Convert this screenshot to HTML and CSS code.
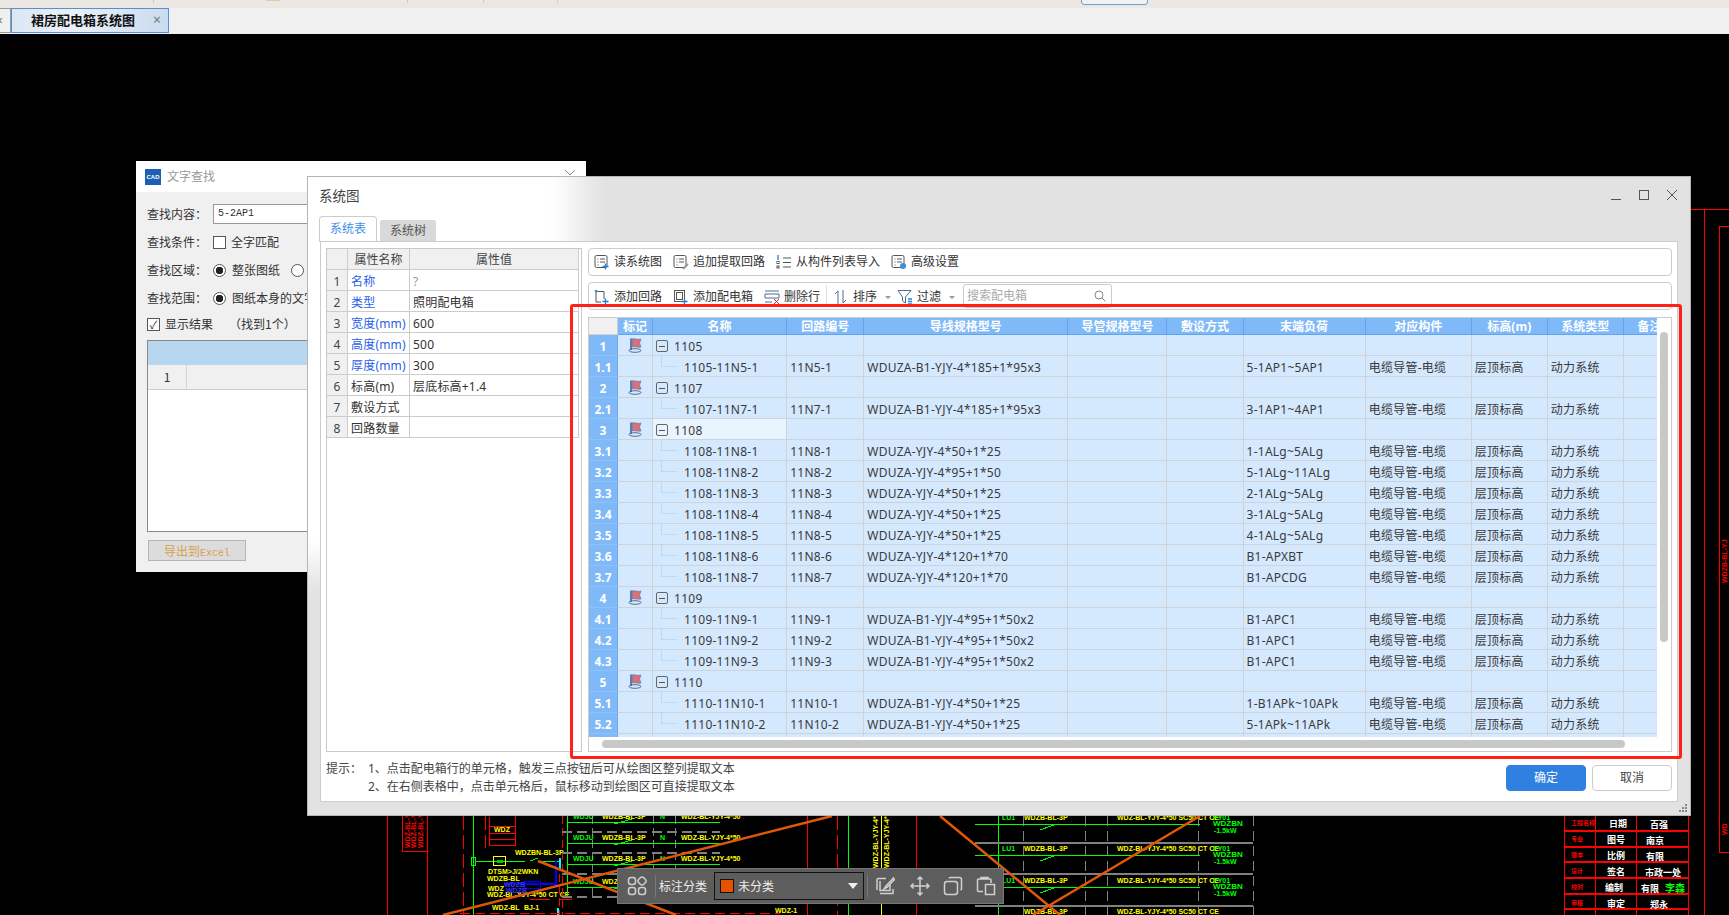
FILE: index.html
```html
<!DOCTYPE html>
<html lang="zh-CN">
<head>
<meta charset="utf-8">
<title>系统图</title>
<link rel="stylesheet" href="styles.css">
</head>
<body>
<svg class="defs" width="0" height="0" aria-hidden="true">
  <symbol id="i-doc" viewBox="0 0 16 16"><rect x="1" y="1.500" width="12" height="12" rx="1.500" class="s-dark"/><path d="M3.500 5h1M6 5h5M3.500 8h1M6 8h5M3.500 11h1" class="s-dark"/></symbol>
  <symbol id="i-plus" viewBox="0 0 16 16"><path d="M11.500 9.500v6M8.500 12.500h6" class="s-blue"/></symbol>
  <symbol id="i-flag" viewBox="0 0 16 16"><ellipse cx="8" cy="13.500" rx="6" ry="1.800" class="s-steel"/><path d="M4 13V1.500" class="s-pole"/><path d="M5 2c3-1 4 1 9 0l-1.500 4 1.500 4c-3 1-6-1-9 0z" class="f-pink"/></symbol>
</svg>

<svg class="cad" viewBox="0 0 1729 915" aria-hidden="true">
  <defs>
    <g id="row-left">
      <path d="M567 0H720" class="c-green"/>
      <path d="M562 10H720" class="c-gray c-dash"/>
      <text x="573" y="-3" class="c-t-green">WDJU</text>
      <text x="602" y="-3" class="c-t-yel">WDZB-BL-3P</text>
      <text x="660" y="-3" class="c-t-green">N</text>
      <path d="M614 2l18-5" class="c-green"/>
      <text x="681" y="-3" class="c-t-yel">WDZ-BL-YJY-4*50</text>
    </g>
    <g id="row-right">
      <path d="M975 0H1200" class="c-green"/>
      <path d="M975 19H1253" class="c-gray"/>
      <text x="1002" y="-4" class="c-t-green">LU1</text>
      <text x="1024" y="-4" class="c-t-yel">WDZB-BL-3P</text>
      <path d="M1040 6l14-5" class="c-green"/>
      <text x="1117" y="-4" class="c-t-yel">WDZ-BL-YJY-4*50 SC50 CT CE</text>
      <text x="1213" y="-4" class="c-t-green">PY01</text>
      <text x="1213" y="2" class="c-t-gb">WDZBN</text>
      <text x="1214" y="9" class="c-t-green">-1.5kW</text>
    </g>
    <g id="row-title">
      <path d="M1564 16H1688" class="c-red2"/>
    </g>
  </defs>
  <path d="M1691 209.500H1729M1704.500 209V915M1688.500 816V915" class="c-red"/>
  <rect x="1719.500" y="226.500" width="20" height="626" class="c-red"/>
  <text x="0" y="0" transform="translate(1727 583) rotate(-90)" class="c-t-red">WDZB-BL-YJ</text>
  <text x="0" y="0" transform="translate(1727 835) rotate(-90)" class="c-t-red">WD</text>

  <path d="M387.500 810V915M427.500 810V915" class="c-red"/>
  <rect x="402.500" y="805" width="25" height="46" class="c-red"/>
  <text transform="translate(410 848) rotate(-90)" class="c-t-red">WDZ-BL-YJY</text>
  <text transform="translate(416 848) rotate(-90)" class="c-t-red">WDZ-BL-YJY</text>
  <text transform="translate(423 848) rotate(-90)" class="c-t-red">WDZ-BL-YJY</text>
  <path d="M463.500 816V915M485.500 816V848" class="c-red c-dash-l"/>
  <path d="M473.500 816V915" class="c-green"/>
  <path d="M489 816.500V845H515V816M489 826H515M489 833H515M489 839H515" class="c-red"/>
  <text x="494" y="832" class="c-t-yel">WDZ</text>
  <rect x="471.500" y="857.500" width="4" height="8" class="c-green"/>
  <path d="M475 861H525M530 861l8-3M538 861H560" class="c-green"/>
  <rect x="493.500" y="856.500" width="12" height="9" class="c-yel"/>
  <rect x="497" y="860" width="6" height="3" class="c-fgreen"/>
  <text x="515" y="855" class="c-t-yel">WDZBN-BL-3P</text>
  <text x="488" y="874" class="c-t-yel">DTSM&gt;J/2WKN</text>
  <text x="487" y="881" class="c-t-yel">WDZB-BL</text>
  <text x="488" y="891" class="c-t-yel">WDZ</text>
  <text x="487" y="897" class="c-t-yel">WDZ-BL-YJY-4*50 CT CE</text>
  <text x="492" y="910" class="c-t-yel">WDZ-BL</text>
  <text x="524" y="910" class="c-t-yel">BJ-1</text>
  <path d="M504 884H556V860" class="c-blue"/>
  <rect x="524.500" y="881.500" width="16" height="7" class="c-blue"/>
  <text x="504" y="887" class="c-t-blue">WDZB</text>
  <text x="506" y="893" class="c-t-blue">WDZB</text>
  <path d="M530 899H550M560 899H572" class="c-red"/>
  <path d="M559.500 862V915M562 816V915" class="c-red c-dash-s"/>
  <path d="M558 908V915M560 858V870" class="c-cyan"/>
  <path d="M567.500 816V898" class="c-green"/>
  <path d="M592.500 816V898M653.500 816V898M675.500 816V898" class="c-gray c-dash-s"/>
  <use href="#row-left" y="822"/>
  <use href="#row-left" y="843"/>
  <use href="#row-left" y="864"/>
  <use href="#row-left" y="887"/>
  <path d="M460 913H780" class="c-red c-dash"/>
  <path d="M807.500 816V915M916.500 816V915" class="c-red"/>
  <path d="M837.500 816V915" class="c-red c-dash-l"/>
  <path d="M881.500 816V915" class="c-yel"/>
  <path d="M848.500 816V915M998.500 816V915" class="c-green"/>
  <text transform="translate(878 868) rotate(-90)" class="c-t-yel">WDZ-BL-YJY-4*50</text>
  <text transform="translate(889 868) rotate(-90)" class="c-t-yel">WDZ-BL-YJY-4*50</text>
  <text x="775" y="913" class="c-t-yel">WDZ-1</text>
  <path d="M1023.500 816V915M1085.500 816V915M1107.500 816V915M1198.500 816V915M1253.500 816V915" class="c-gray c-dash"/>
  <use href="#row-right" y="824"/>
  <use href="#row-right" y="855"/>
  <use href="#row-right" y="887"/>
  <text x="1024" y="914" class="c-t-yel">WDZB-BL-3P</text>
  <text x="1117" y="914" class="c-t-yel">WDZ-BL-YJY-4*50 SC50 CT CE</text>
  <path d="M1564.500 816V915M1595.500 816V915M1636.500 816V915M1688.500 816V915" class="c-red2"/>
  <use href="#row-title" y="815"/>
  <use href="#row-title" y="831"/>
  <use href="#row-title" y="846"/>
  <use href="#row-title" y="862"/>
  <use href="#row-title" y="878"/>
  <use href="#row-title" y="893"/>
  <g class="c-t-tit-r">
    <text x="1571" y="825">工程名称</text><text x="1571" y="841">专业</text><text x="1571" y="857">版本</text><text x="1571" y="873">设计</text><text x="1571" y="889">校对</text><text x="1571" y="905">审核</text>
  </g>
  <g class="c-t-tit-w">
    <text x="1609" y="827">日期</text><text x="1607" y="843">图号</text><text x="1607" y="859">比例</text><text x="1607" y="875">签名</text><text x="1605" y="891">编制</text><text x="1607" y="907">审定</text>
    <text x="1650" y="828">百强</text><text x="1646" y="844">南京</text><text x="1646" y="860">有限</text><text x="1645" y="876">市政一处</text><text x="1641" y="892">有限</text><text x="1650" y="908">郑永</text>
  </g>
  <text x="1665" y="892" class="c-t-tit-g">李森</text>
  <path d="M443 915L832 816M538 861L676 915M940 816L1060 915M1200 816L1033 915" class="c-orange"/>
</svg>

<header class="appbar">
  <div class="appbar-top">
    <span class="tick tick-a"></span><span class="tick-o"></span><span class="tick tick-b"></span><span class="tick tick-c"></span><span class="tick tick-d"></span>
    <span class="appbar-btn"></span>
  </div>
  <div class="tabstrip">
    <div class="tab-stub">×</div>
    <div class="tab-active"><span class="tab-name">裙房配电箱系统图</span><span class="tab-x">×</span></div>
  </div>
</header>

<section class="find">
  <div class="find-title">
    <span class="find-logo">CAD</span><span class="find-name">文字查找</span>
    <svg class="find-close" width="10" height="6" viewBox="0 0 10 6"><path d="M0 0l5 5 5-5" class="s-gray"/></svg>
  </div>
  <div class="find-body">
    <div class="frow"><span class="flabel">查找内容：</span><span class="finput">5-2AP1</span></div>
    <div class="frow"><span class="flabel">查找条件：</span><span class="fcheck"></span><span>全字匹配</span></div>
    <div class="frow"><span class="flabel">查找区域：</span><span class="fradio on"></span><span class="fr-t">整张图纸</span><span class="fradio"></span></div>
    <div class="frow"><span class="flabel">查找范围：</span><span class="fradio on"></span><span>图纸本身的文字</span></div>
    <div class="frow frow-res"><span class="fcheck small-check">✓</span><span>显示结果</span><span class="found">（找到1个）</span></div>
    <div class="fresult">
      <div class="fresult-head"></div>
      <div class="fresult-row"><span class="fresult-num">1</span></div>
    </div>
    <div class="fexport">导出到<span class="mono">Excel</span></div>
  </div>
</section>

<section class="sys">
  <div class="acrylic"></div>
  <div class="sys-title">
    <span class="sys-name">系统图</span>
    <div class="wctrl">
      <svg width="12" height="12" viewBox="0 0 12 12"><path d="M1 10.500H11" class="s-dark"/></svg>
      <svg width="12" height="12" viewBox="0 0 12 12"><rect x="1.500" y="1.500" width="9" height="9" class="s-dark"/></svg>
      <svg width="12" height="12" viewBox="0 0 12 12"><path d="M1 1L11 11M11 1L1 11" class="s-dark"/></svg>
    </div>
  </div>
  <div class="tabs"><span class="stab on">系统表</span><span class="stab">系统树</span></div>
  <div class="panel">
    <div class="main">
      <div class="props">
        <table class="ptable">
          <colgroup><col class="pc1"><col class="pc2"><col></colgroup>
          <thead><tr><th></th><th>属性名称</th><th>属性值</th></tr></thead>
          <tbody>
            <tr><th>1</th><td class="link">名称</td><td class="q">?</td></tr>
            <tr><th>2</th><td class="link">类型</td><td>照明配电箱</td></tr>
            <tr><th>3</th><td class="link">宽度(mm)</td><td>600</td></tr>
            <tr><th>4</th><td class="link">高度(mm)</td><td>500</td></tr>
            <tr><th>5</th><td class="link">厚度(mm)</td><td>300</td></tr>
            <tr><th>6</th><td>标高(m)</td><td>层底标高+1.4</td></tr>
            <tr><th>7</th><td>敷设方式</td><td></td></tr>
            <tr><th>8</th><td>回路数量</td><td></td></tr>
          </tbody>
        </table>
      </div>
      <div class="right">
        <div class="tbar tbar1">
          <span class="ti"><svg class="ic"><use href="#i-doc"/><use href="#i-plus"/></svg>读系统图</span>
          <span class="ti"><svg class="ic"><use href="#i-doc"/><path d="M10 15l5-5" class="s-gray2"/></svg>追加提取回路</span>
          <span class="ti"><svg class="ic" viewBox="0 0 16 16"><path d="M2 1v5" class="s-blue"/><path d="M7 4h8M7 8.500h8M7 13h8" class="s-dark"/><rect x="1" y="7.500" width="2" height="2" class="s-dark"/><rect x="1" y="12" width="2" height="2" class="s-dark"/></svg>从构件列表导入</span>
          <span class="ti"><svg class="ic"><use href="#i-doc"/><circle cx="12" cy="12" r="3" class="f-blue"/></svg>高级设置</span>
        </div>
        <div class="tbar tbar2">
          <span class="ti"><svg class="ic" viewBox="0 0 16 16"><path d="M2 2.500H10V10M2 2.500V13H7" class="s-dark"/><circle cx="2" cy="2" r="1.300" class="f-blue"/><path d="M11.500 9.500v6M8.500 12.500h6" class="s-blue"/></svg>添加回路</span>
          <span class="ti"><svg class="ic"><rect x="1.500" y="1.500" width="10" height="11" class="s-dark"/><rect x="3.500" y="3.500" width="6" height="7" class="s-dark"/><use href="#i-plus"/></svg>添加配电箱</span>
          <span class="ti"><svg class="ic" viewBox="0 0 16 16"><path d="M1 2h14M1 5h14v4H1zM1 13h7" class="s-steel"/><path d="M10 10l5 5M15 10l-5 5" class="s-red"/></svg>删除行</span>
          <span class="tsep"></span>
          <span class="ti ti-sort"><svg class="ic" viewBox="0 0 16 16"><path d="M5 15V2L2 5M10 1v13l3-3" class="s-steel"/></svg>排序<i class="caret"></i></span>
          <span class="ti"><svg class="ic" viewBox="0 0 16 16"><path d="M1 1.500H14L8.500 8v6L5.500 12V8z" class="s-steel"/><path d="M11 10h4M11 12.500h4M11 15h4" class="s-blue"/></svg>过滤<i class="caret"></i></span>
          <span class="search"><span class="search-t">搜索配电箱</span><svg width="12" height="12" viewBox="0 0 12 12"><circle cx="5" cy="5" r="4" class="s-gray"/><path d="M8 8l3.500 3.500" class="s-gray"/></svg></span>
        </div>
        <div class="gridbox">
          <div class="clip">
            <table class="grid">
              <colgroup><col class="c1"><col class="c2"><col class="c3"><col class="c4"><col class="c5"><col class="c6"><col class="c7"><col class="c8"><col class="c9"><col class="c10"><col class="c11"><col class="c12"></colgroup>
              <thead><tr><th></th><th>标记</th><th>名称</th><th>回路编号</th><th>导线规格型号</th><th>导管规格型号</th><th>敷设方式</th><th>末端负荷</th><th>对应构件</th><th>标高(m)</th><th>系统类型</th><th>备注</th></tr></thead>
              <tbody>
                <tr><th>1</th><td class="mk"><svg class="flag"><use href="#i-flag"/></svg></td><td><span class="minus"></span>1105</td><td></td><td></td><td></td><td></td><td></td><td></td><td></td><td></td><td></td></tr>
                <tr><th>1.1</th><td></td><td class="child">1105-11N5-1</td><td>11N5-1</td><td>WDUZA-B1-YJY-4*185+1*95x3</td><td></td><td></td><td>5-1AP1~5AP1</td><td>电缆导管-电缆</td><td>层顶标高</td><td>动力系统</td><td></td></tr>
                <tr><th>2</th><td class="mk"><svg class="flag"><use href="#i-flag"/></svg></td><td><span class="minus"></span>1107</td><td></td><td></td><td></td><td></td><td></td><td></td><td></td><td></td><td></td></tr>
                <tr><th>2.1</th><td></td><td class="child">1107-11N7-1</td><td>11N7-1</td><td>WDUZA-B1-YJY-4*185+1*95x3</td><td></td><td></td><td>3-1AP1~4AP1</td><td>电缆导管-电缆</td><td>层顶标高</td><td>动力系统</td><td></td></tr>
                <tr><th>3</th><td class="mk"><svg class="flag"><use href="#i-flag"/></svg></td><td class="active"><span class="minus"></span>1108</td><td></td><td></td><td></td><td></td><td></td><td></td><td></td><td></td><td></td></tr>
                <tr><th>3.1</th><td></td><td class="child">1108-11N8-1</td><td>11N8-1</td><td>WDUZA-YJY-4*50+1*25</td><td></td><td></td><td>1-1ALg~5ALg</td><td>电缆导管-电缆</td><td>层顶标高</td><td>动力系统</td><td></td></tr>
                <tr><th>3.2</th><td></td><td class="child">1108-11N8-2</td><td>11N8-2</td><td>WDUZA-YJY-4*95+1*50</td><td></td><td></td><td>5-1ALg~11ALg</td><td>电缆导管-电缆</td><td>层顶标高</td><td>动力系统</td><td></td></tr>
                <tr><th>3.3</th><td></td><td class="child">1108-11N8-3</td><td>11N8-3</td><td>WDUZA-YJY-4*50+1*25</td><td></td><td></td><td>2-1ALg~5ALg</td><td>电缆导管-电缆</td><td>层顶标高</td><td>动力系统</td><td></td></tr>
                <tr><th>3.4</th><td></td><td class="child">1108-11N8-4</td><td>11N8-4</td><td>WDUZA-YJY-4*50+1*25</td><td></td><td></td><td>3-1ALg~5ALg</td><td>电缆导管-电缆</td><td>层顶标高</td><td>动力系统</td><td></td></tr>
                <tr><th>3.5</th><td></td><td class="child">1108-11N8-5</td><td>11N8-5</td><td>WDUZA-YJY-4*50+1*25</td><td></td><td></td><td>4-1ALg~5ALg</td><td>电缆导管-电缆</td><td>层顶标高</td><td>动力系统</td><td></td></tr>
                <tr><th>3.6</th><td></td><td class="child">1108-11N8-6</td><td>11N8-6</td><td>WDUZA-YJY-4*120+1*70</td><td></td><td></td><td>B1-APXBT</td><td>电缆导管-电缆</td><td>层顶标高</td><td>动力系统</td><td></td></tr>
                <tr><th>3.7</th><td></td><td class="child">1108-11N8-7</td><td>11N8-7</td><td>WDUZA-YJY-4*120+1*70</td><td></td><td></td><td>B1-APCDG</td><td>电缆导管-电缆</td><td>层顶标高</td><td>动力系统</td><td></td></tr>
                <tr><th>4</th><td class="mk"><svg class="flag"><use href="#i-flag"/></svg></td><td><span class="minus"></span>1109</td><td></td><td></td><td></td><td></td><td></td><td></td><td></td><td></td><td></td></tr>
                <tr><th>4.1</th><td></td><td class="child">1109-11N9-1</td><td>11N9-1</td><td>WDUZA-B1-YJY-4*95+1*50x2</td><td></td><td></td><td>B1-APC1</td><td>电缆导管-电缆</td><td>层顶标高</td><td>动力系统</td><td></td></tr>
                <tr><th>4.2</th><td></td><td class="child">1109-11N9-2</td><td>11N9-2</td><td>WDUZA-B1-YJY-4*95+1*50x2</td><td></td><td></td><td>B1-APC1</td><td>电缆导管-电缆</td><td>层顶标高</td><td>动力系统</td><td></td></tr>
                <tr><th>4.3</th><td></td><td class="child">1109-11N9-3</td><td>11N9-3</td><td>WDUZA-B1-YJY-4*95+1*50x2</td><td></td><td></td><td>B1-APC1</td><td>电缆导管-电缆</td><td>层顶标高</td><td>动力系统</td><td></td></tr>
                <tr><th>5</th><td class="mk"><svg class="flag"><use href="#i-flag"/></svg></td><td><span class="minus"></span>1110</td><td></td><td></td><td></td><td></td><td></td><td></td><td></td><td></td><td></td></tr>
                <tr><th>5.1</th><td></td><td class="child">1110-11N10-1</td><td>11N10-1</td><td>WDUZA-B1-YJY-4*50+1*25</td><td></td><td></td><td>1-B1APk~10APk</td><td>电缆导管-电缆</td><td>层顶标高</td><td>动力系统</td><td></td></tr>
                <tr><th>5.2</th><td></td><td class="child">1110-11N10-2</td><td>11N10-2</td><td>WDUZA-B1-YJY-4*50+1*25</td><td></td><td></td><td>5-1APk~11APk</td><td>电缆导管-电缆</td><td>层顶标高</td><td>动力系统</td><td></td></tr>
                <tr><th></th><td></td><td></td><td></td><td></td><td></td><td></td><td></td><td></td><td></td><td></td><td></td></tr>
              </tbody>
            </table>
          </div>
          <div class="vbar"><div class="vthumb"></div></div>
          <div class="hbar"><div class="hthumb"></div></div>
        </div>
      </div>
    </div>
    <div class="foot">
      <div class="hints">
        <span class="hint-l">提示：</span>
        <div class="hint-b"><p>1、点击配电箱行的单元格，触发三点按钮后可从绘图区整列提取文本</p><p>2、在右侧表格中，点击单元格后，鼠标移动到绘图区可直接提取文本</p></div>
      </div>
      <div class="btns"><span class="btn primary">确定</span><span class="btn">取消</span></div>
    </div>
  </div>
  <svg class="grip" width="10" height="10" viewBox="0 0 10 10"><path d="M7 1h2v2H7zM4 4h2v2H4zM7 4h2v2H7zM1 7h2v2H1zM4 7h2v2H4zM7 7h2v2H7z" class="f-grip"/></svg>
</section>

<div class="redbox"></div>

<div class="floatbar">
  <svg class="fi" width="20" height="20" viewBox="0 0 20 20"><rect x="1.500" y="1.500" width="7" height="7" rx="2.500" class="s-light"/><rect x="11.500" y="1.500" width="7" height="7" rx="2.500" transform="rotate(45 15 5)" class="s-light"/><rect x="1.500" y="11.500" width="7" height="7" rx="2.500" class="s-light"/><rect x="11.500" y="11.500" width="7" height="7" rx="2.500" class="s-light"/></svg>
  <span class="fb-sep"></span>
  <span class="fb-label">标注分类</span>
  <div class="fb-select"><span class="swatch"></span><span class="fb-val">未分类</span><i class="fb-caret"></i></div>
  <span class="fb-sep"></span>
  <svg class="fi2" width="20" height="20" viewBox="0 0 20 20"><path d="M11 2.500H3.500a1.500 1.500 0 0 0-1.500 1.500V14M5 17.500H18V13M18.500 2L11 10l-2 3 3-1.500L19.500 3.500z" class="s-light"/><path d="M5 5v9.500H15V9" class="s-light"/></svg>
  <svg class="fi2 fi2-next" width="20" height="20" viewBox="0 0 20 20"><path d="M10 1v18M1 10h18M7.500 3.500L10 1l2.500 2.500M7.500 16.500L10 19l2.500-2.500M3.500 7.500L1 10l2.500 2.500M16.500 7.500L19 10l-2.500 2.500" class="s-light"/></svg>
  <svg class="fi2" width="20" height="20" viewBox="0 0 20 20"><rect x="1.500" y="5.500" width="13" height="13" rx="2.500" class="s-light"/><path d="M6 2.500a1.500 1.500 0 0 1 1.500-1h9a2 2 0 0 1 2 2v9a1.500 1.500 0 0 1-1 1.500" class="s-light"/></svg>
  <svg class="fi2" width="20" height="20" viewBox="0 0 20 20"><path d="M7 15.500H2.500a1 1 0 0 1-1-1V4a1 1 0 0 1 1-1H14a1 1 0 0 1 1 1v3M5 3V1.500h7V3" class="s-light"/><rect x="9.500" y="8.500" width="9" height="10" class="s-light"/></svg>
</div>
</body>
</html>
```

FILE: styles.css
```css
* { box-sizing: border-box; }
html, body { margin: 0; padding: 0; }
body {
  width: 1729px;
  height: 915px;
  position: relative;
  overflow: hidden;
  background: #000;
  font: 12px/1.2 "Noto Sans", "Noto Sans CJK SC", sans-serif;
  color: #333;
}
p { margin: 0; }
.defs { position: absolute; }

/* shared svg paint */
.s-dark, .s-blue, .s-gray, .s-gray2, .s-steel, .s-red, .s-light, .s-pole { fill: none; stroke-width: 1; }
.s-dark { stroke: #555; }
.s-blue { stroke: #1f7fe0; stroke-width: 1.300; }
.s-gray { stroke: #888; }
.s-gray2 { stroke: #999; stroke-width: 2; }
.s-steel { stroke: #4f6f8f; }
.s-pole { stroke: #2f5f9f; stroke-width: 1.500; }
.s-red { stroke: #e03030; }
.s-light { stroke: #d0d0d0; stroke-width: 1.500; }
.f-blue { fill: #3a8ee0; }
.f-pink { fill: #d9707a; stroke: #4a78b0; stroke-width: .6; }
.f-grip { fill: #888; }

/* app chrome */
.appbar { display: flex; flex-direction: column; height: 34px; }
.appbar-top { height: 8px; background: #ebe7e3; position: relative; }
.tick { position: absolute; top: 0; width: 1px; height: 3px; background: #cfc9c4; }
.tick-a { left: 153px; }
.tick-b { left: 407px; }
.tick-c { left: 483px; }
.tick-d { left: 557px; }
.tick-o { position: absolute; left: 266px; top: 0; width: 14px; height: 1px; background: #e6c89c; }
.appbar-btn { position: absolute; left: 1081px; top: -6px; width: 67px; height: 11px; border: 1px solid #6f9fd8; border-radius: 3px; background: #f3f1ef; }
.tabstrip { flex: 1; display: flex; background: #f0f0f0; }
.tab-stub { width: 11px; height: 25px; border: 1px solid #9a9a9a; border-left: 0; color: #666; font-size: 12px; line-height: 23px; text-indent: -4px; overflow: hidden; }
.tab-active {
  width: 158px;
  height: 25px;
  display: flex;
  align-items: center;
  padding: 0 7px 0 19px;
  justify-content: space-between;
  border: 1px solid #5a8fcf;
  background: linear-gradient(90deg, #dbe7f4, #eaf0f7 40%, #c9dcf0);
}
.tab-name { font-size: 13px; font-weight: 700; color: #111; }
.tab-x { font-size: 14px; color: #777; }

/* CAD canvas */
.cad { position: absolute; left: 0; top: 0; width: 1729px; height: 915px; }
.cad path, .cad rect { fill: none; shape-rendering: crispEdges; }
.cad .c-orange { stroke: #e0570a; stroke-width: 2.500; shape-rendering: auto; }
.c-red { stroke: #f00; }
.c-red2 { stroke: #f00; stroke-width: 1.500; }
.c-green { stroke: #0f0; }
.c-gray { stroke: #808080; stroke-width: 1.500; }
.c-yel { stroke: #ff0; }
.c-blue { stroke: #00f; stroke-width: 1.500; }
.c-cyan { stroke: #0ff; stroke-width: 2; }
.cad .c-fgreen { fill: #0c0; }
.c-dash { stroke-dasharray: 10 5; }
.c-dash-l { stroke-dasharray: 14 5; }
.c-dash-s { stroke-dasharray: 8 4; }
.c-t-yel, .c-t-green, .c-t-red, .c-t-blue, .c-t-gb { font: 700 7px "Liberation Sans", sans-serif; }
.c-t-yel { fill: #ff0; }
.c-t-green { fill: #0f0; }
.c-t-gb { fill: #0f0; font-size: 8px; }
.c-t-red { fill: #f00; }
.c-t-blue { fill: #33f; }
.c-t-tit-r { fill: #f00; font: 700 6px "Noto Sans CJK SC", sans-serif; }
.c-t-tit-w { fill: #fff; font: 700 9px "Noto Sans CJK SC", sans-serif; }
.c-t-tit-g { fill: #0f0; font: 700 10px "Noto Sans CJK SC", sans-serif; }

/* find window */
.find {
  position: absolute;
  left: 136px;
  top: 161px;
  width: 450px;
  height: 411px;
  background: #f0f0f0;
  display: flex;
  flex-direction: column;
  color: #333;
  font-family: "Noto Sans CJK SC", sans-serif;
}
.find-title { height: 31px; background: #fff; display: flex; align-items: center; padding: 0 11px 0 9px; }
.find-logo { width: 16px; height: 16px; background: #1d5fb0; color: #fff; font: 700 6px/16px "Liberation Sans", sans-serif; text-align: center; }
.find-name { margin-left: 6px; color: #999; font-size: 12px; }
.find-close { margin-left: auto; margin-top: -8px; }
.find-body { flex: 1; padding: 8px 11px; display: flex; flex-direction: column; }
.frow { height: 28px; display: flex; align-items: center; }
.flabel { width: 66px; }
.finput { width: 250px; height: 20px; background: #fff; border: 1px solid #999; padding-left: 4px; font: 10px/18px "Liberation Mono", monospace; }
.fcheck { width: 13px; height: 13px; border: 1px solid #555; background: #fff; margin-right: 5px; }
.small-check { font-size: 11px; line-height: 11px; color: #333; text-align: center; }
.fradio { width: 13px; height: 13px; border-radius: 50%; border: 1px solid #555; background: #fff; margin-right: 6px; display: block; }
.fradio.on { background: radial-gradient(circle, #222 0 3.500px, #fff 4px); }
.fr-t { margin-right: 11px; }
.frow-res { height: 24px; }
.found { margin-left: 16px; }
.fresult { height: 192px; margin-top: 4px; border: 1px solid #888; background: #fff; }
.fresult-head { height: 24px; background: #b7d7f0; }
.fresult-row { height: 25px; background: #f0f0f0; border-bottom: 1px solid #ccc; }
.fresult-num { display: block; width: 39px; height: 24px; line-height: 24px; text-align: center; border-right: 1px solid #d5d5d5; }
.fexport { width: 98px; height: 21px; margin-top: 8px; border: 1px solid #b5b5b5; background: #dcdcdc; color: #d9a050; text-align: center; line-height: 19px; margin-left: 1px; }
.mono { font: 10px "Liberation Mono", monospace; }

/* system window */
.sys {
  position: absolute;
  left: 307px;
  top: 176px;
  width: 1384px;
  height: 640px;
  padding: 0 12px 13px;
  display: flex;
  flex-direction: column;
  background: #e3e2e2;
  border: 1px solid #b5b5b5;
  overflow: hidden;
}
.acrylic { position: absolute; left: -60px; top: -60px; width: 330px; height: 450px; background: #fff; filter: blur(18px); }
.sys-title { position: relative; height: 39px; display: flex; align-items: center; justify-content: space-between; }
.sys-name { font-size: 13.500px; color: #444; margin-left: -1px; }
.wctrl { display: flex; gap: 16px; margin-top: -4px; }
.tabs { position: relative; height: 25px; display: flex; align-items: flex-end; gap: 3px; margin-left: -1px; }
.stab { width: 56px; height: 21px; background: #d9d9d9; color: #555; text-align: center; line-height: 21px; border-radius: 2px 2px 0 0; }
.stab.on { width: 58px; height: 26px; margin-bottom: -1px; background: #fff; color: #3f8fe8; border: 1px solid #ccc; border-bottom: 0; line-height: 24px; border-radius: 4px 4px 0 0; }
.panel { position: relative; flex: 1; display: flex; flex-direction: column; background: #fff; border: 1px solid #ccc; padding: 6px 5px 0; }
.main { height: 504px; display: flex; gap: 6px; }

/* props */
.props { width: 256px; border: 1px solid #c8c8c8; }
.ptable { width: 252px; table-layout: fixed; border-collapse: separate; border-spacing: 0; }
.pc1 { width: 21px; }
.pc2 { width: 62px; }
.ptable th, .ptable td { height: 21px; padding: 4px 3px 0; font-weight: 400; white-space: nowrap; overflow: hidden; border-right: 1px solid #ccc; border-bottom: 1px solid #ccc; }
.ptable thead th { padding-top: 2px; }
.ptable th { background: #f0f0f0; text-align: center; color: #444; }
.ptable tbody th { padding: 4px 0 0; }
.ptable td { letter-spacing: .2px; }
.link { color: #2a5fe8; }
.q { color: #999; }

/* right column */
.right { width: 1084px; display: flex; flex-direction: column; }
.tbar { display: flex; align-items: center; gap: 11px; padding-left: 5px; border: 1px solid #ccc; border-radius: 4px; background: #fff; }
.tbar1 { height: 28px; }
.tbar2 { height: 29px; margin-top: 6px; }
.tbar2 .ti { padding-top: 3px; }
.ti { display: flex; align-items: center; gap: 4px; color: #333; white-space: nowrap; }
.ic { width: 16px; height: 16px; }
.tsep { width: 1px; height: 22px; background: #ddd; margin: 0 -5px; }
.ti-sort { margin-right: -5px; }
.caret { width: 0; height: 0; margin-left: 4px; border: 3px solid transparent; border-top-color: #999; border-bottom: 0; }
.search { width: 149px; height: 24px; margin-left: -3px; display: flex; align-items: center; justify-content: space-between; padding: 0 5px 0 3px; border: 1px solid #ccc; border-radius: 3px; }
.search-t { color: #aaa; }

/* grid */
.gridbox { flex: 1; margin-top: 7px; display: grid; grid-template-columns: 1068px 14px; grid-template-rows: 419px 14px; border: 1px solid #ccc; background: #fff; }
.clip { overflow: hidden; }
.grid { width: 1087px; table-layout: fixed; border-collapse: separate; border-spacing: 0; }
.c1 { width: 29px; } .c2 { width: 35px; } .c3 { width: 134px; } .c4 { width: 77px; }
.c5 { width: 204px; } .c6 { width: 99px; } .c7 { width: 76px; } .c8 { width: 122px; }
.c9 { width: 106px; } .c10 { width: 76px; } .c11 { width: 76px; } .c12 { width: 52px; }
.grid thead th { height: 17px; padding: 2px 0 0; background: #80b9f8; color: #fff; font-weight: 700; line-height: 14px; border-right: 1px solid #64a4ee; border-bottom: 1px solid #64a4ee; }
.grid thead th:first-child { background: #f0f0f0; border-color: #d0d0d0; }
.grid tbody th { height: 21px; padding: 4px 0 0; line-height: 16px; background: #80b9f8; color: #fff; font-weight: 700; border-right: 1px solid #6eaaf0; border-bottom: 1px solid #8fc2fa; }
.grid td { height: 21px; padding: 4px 3px 0; line-height: 16px; letter-spacing: .25px; background: #d4e8fe; border-right: 1px solid #cfd3d8; border-bottom: 1px solid #cfd3d8; white-space: nowrap; overflow: hidden; color: #3a3a3a; }
.grid td.mk { padding: 0; text-align: center; vertical-align: middle; }
.flag { width: 16px; height: 16px; display: block; margin: 0 auto; }
.grid td.active { background: #e8f4fe; }
.grid td.child {
  padding-left: 31px;
  background-image: linear-gradient(#c4d7ea, #c4d7ea), linear-gradient(#c4d7ea, #c4d7ea);
  background-size: 1px 10px, 16px 1px;
  background-position: 8px 0, 8px 10px;
  background-repeat: no-repeat;
}
.minus { display: inline-block; width: 12px; height: 12px; margin-right: 6px; vertical-align: -1px; border: 1px solid #666; border-radius: 2px; background: linear-gradient(#555, #555) center / 6px 1px no-repeat; }
.vbar { padding: 14px 3px 0; }
.vthumb { width: 8px; height: 310px; background: #c8c8c8; border-radius: 4px; }
.hbar { grid-column: 1 / span 2; padding: 3px 0 0 13px; }
.hthumb { width: 1023px; height: 8px; background: #c8c8c8; border-radius: 4px; }

/* foot */
.foot { flex: 1; display: flex; justify-content: space-between; }
.hints { display: flex; padding-top: 8px; color: #444; line-height: 18px; }
.hint-l { width: 42px; }
.btns { display: flex; gap: 6px; padding-top: 13px; }
.btn { width: 80px; height: 26px; text-align: center; line-height: 24px; border: 1px solid #ccc; border-radius: 4px; background: #fff; color: #444; }
.primary { background: #2f80e0; border-color: #2f80e0; color: #fff; }
.grip { position: absolute; right: 2px; bottom: 2px; }

/* annotation */
.redbox { position: absolute; left: 570px; top: 304px; width: 1112px; height: 455px; border: 3px solid #ff2018; border-radius: 3px; }

/* floating bar */
.floatbar {
  position: absolute;
  left: 617px;
  top: 868px;
  width: 387px;
  height: 36px;
  display: flex;
  align-items: center;
  background: #5d5d5d;
  border: 1px solid #777;
  padding-left: 9px;
  color: #eee;
}
.fi { flex: none; }
.fb-sep { width: 1px; height: 22px; background: #787878; margin: 0 3px 0 8px; }
.fb-label { font-size: 12px; white-space: nowrap; font-family: "Noto Sans CJK SC", sans-serif; }
.fb-select { width: 150px; height: 28px; margin-left: 7px; display: flex; align-items: center; padding: 0 5px; border: 1px solid #111; background: #5d5d5d; }
.swatch { width: 14px; height: 14px; background: #e65100; border: 1px solid #111; }
.fb-val { margin-left: 4px; font-family: "Noto Sans CJK SC", sans-serif; }
.fb-caret { margin-left: auto; width: 0; height: 0; border: 5px solid transparent; border-top: 6px solid #eee; border-bottom: 0; }
.fi2 { flex: none; margin-left: 13px; }
.fb-select + .fb-sep { margin: 0 0 0 3px; }
.fb-sep + .fi2 { margin-left: 7px; }
.fi2-next { margin-left: 15px; }
```
